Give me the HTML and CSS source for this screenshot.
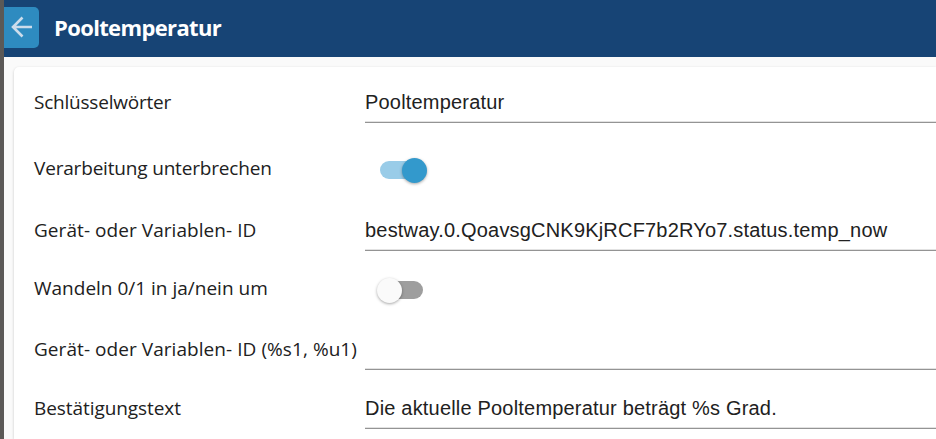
FILE: index.html
```html
<!DOCTYPE html>
<html lang="de">
<head>
    <meta charset="UTF-8">
    <meta name="viewport" content="width=device-width, initial-scale=1.0">
    <title>Pooltemperatur</title>
    <link rel="stylesheet" href="styles.css">
</head>
<body>
    <header class="header">
        <button class="back" aria-label="Zurück">
            <svg width="22" height="22" viewBox="0 0 22 22">
                <path d="M21 11H2.5M11.5 1.5L2 11L11.5 20.5" fill="none" stroke="#ccdceb" stroke-width="2.6"/>
            </svg>
        </button>
        <h1 class="title">Pooltemperatur</h1>
    </header>
    <main class="card">
        <div class="row">
            <label class="label keywords" for="keywords">Schlüsselwörter</label>
            <input class="field" id="keywords" type="text" value="Pooltemperatur">
        </div>
        <div class="row switch-row">
            <span class="label interrupt">Verarbeitung unterbrechen</span>
            <div class="switch on"><span class="thumb"></span></div>
        </div>
        <div class="row">
            <label class="label device" for="device">Gerät- oder Variablen- ID</label>
            <input class="field" id="device" type="text" value="bestway.0.QoavsgCNK9KjRCF7b2RYo7.status.temp_now" spellcheck="false">
        </div>
        <div class="row switch-row">
            <span class="label convert">Wandeln 0/1 in ja/nein um</span>
            <div class="switch"><span class="thumb"></span></div>
        </div>
        <div class="row">
            <label class="label device" for="device1">Gerät- oder Variablen- ID (%s1, %u1)</label>
            <input class="field" id="device1" type="text" value="">
        </div>
        <div class="row">
            <label class="label confirm" for="confirm">Bestätigungstext</label>
            <input class="field" id="confirm" type="text" value="Die aktuelle Pooltemperatur beträgt %s Grad.">
        </div>
    </main>
</body>
</html>
```
FILE: styles.css
```css
* {
    box-sizing: border-box;
}

body {
    margin: 0;
    height: 439px;
    overflow: hidden;
    border-left: 4px solid #5b5957;
    background-color: #fafafa;
    font-family: "Open Sans", "Noto Sans", sans-serif;
    color: #212121;
}

.header {
    display: flex;
    align-items: flex-start;
    height: 57px;
    padding-top: 7px;
    background-color: #174475;
}

.back {
    display: flex;
    align-items: center;
    width: 35px;
    height: 41px;
    padding: 0 0 2px 7px;
    border: none;
    border-radius: 0 5px 5px 0;
    background-color: #2e8bc0;
    cursor: pointer;
}

.title {
    margin: 0 0 0 15px;
    font-size: 22px;
    font-weight: 700;
    line-height: 41px;
    letter-spacing: -0.64px;
    color: #fff;
}

.card {
    display: grid;
    grid-template-rows: 66px 68px 54px 64px 56px 62px;
    margin: 10px 0 0 10px;
    padding: 2px 0 0 20px;
    border-radius: 5px 0 0 0;
    background-color: #fff;
    box-shadow: 0 1px 3px rgba(0, 0, 0, 0.2);
}

.row {
    display: grid;
    grid-template-columns: 331px 1fr;
    align-items: center;
}

.switch-row {
    padding-bottom: 2px;
}

.label {
    font-size: 19px;
    line-height: 26px;
    white-space: nowrap;
}

.keywords {
    letter-spacing: -0.22px;
}

.interrupt {
    letter-spacing: -0.18px;
}

.device {
    letter-spacing: 0.06px;
}

.confirm {
    letter-spacing: -0.07px;
}

.field {
    width: 100%;
    height: 42px;
    padding: 2px 0 0;
    border: none;
    border-bottom: 1px solid #949494;
    border-radius: 0;
    outline: none;
    background: transparent;
    box-shadow: inset 0 -1px #e2e2e2;
    font-family: "Liberation Sans", Arial, sans-serif;
    font-size: 20px;
    letter-spacing: 0.19px;
    color: #212121;
}

.switch {
    display: flex;
    align-items: center;
    width: 43px;
    height: 18px;
    margin: 4px 0 0 15px;
    border-radius: 9px;
    background-color: #9e9e9e;
}

.thumb {
    flex: none;
    width: 25px;
    height: 25px;
    margin-left: -3px;
    border-radius: 50%;
    background-color: #fafafa;
    box-shadow: 0 1px 3px rgba(0, 0, 0, 0.35);
}

.switch.on {
    background-color: #99cce8;
}

.switch.on .thumb {
    margin-left: 22px;
    background-color: #3399cc;
}
```
